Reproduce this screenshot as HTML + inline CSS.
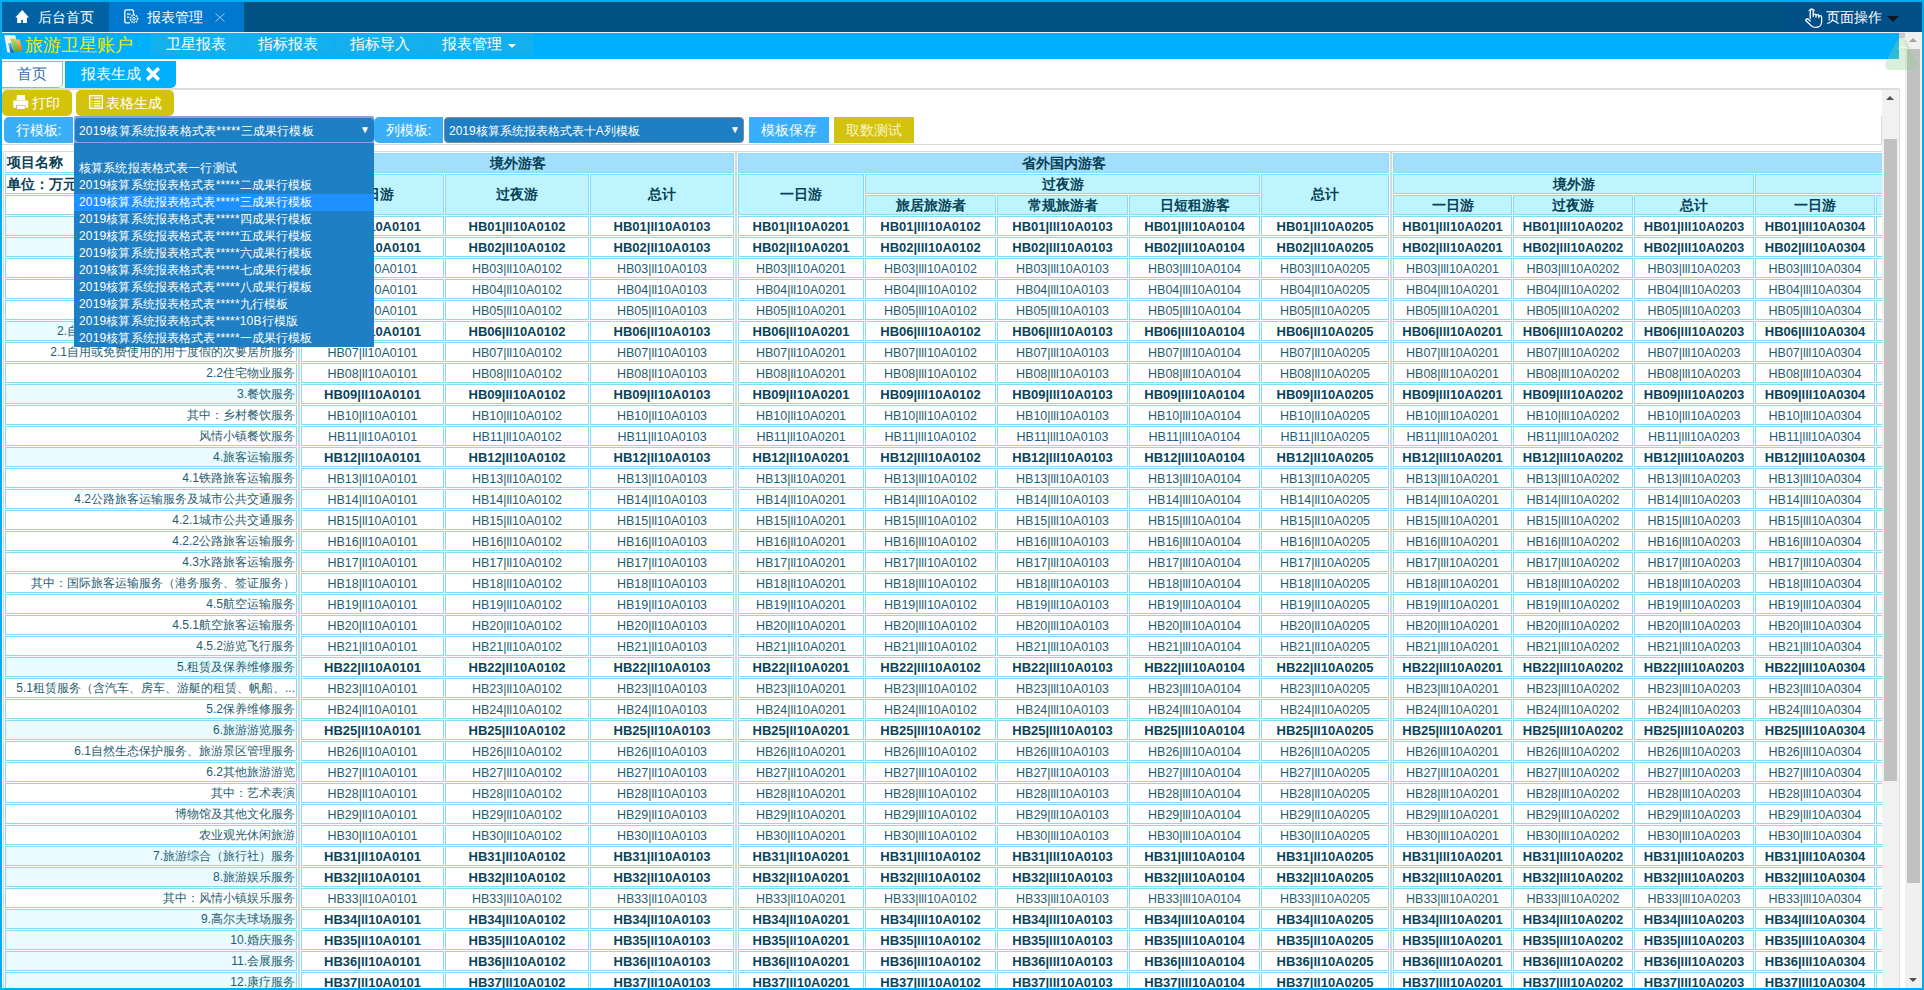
<!DOCTYPE html>
<html><head><meta charset="utf-8"><title>报表生成</title>
<style>
*{box-sizing:border-box;margin:0;padding:0}
html,body{width:1924px;height:990px;overflow:hidden;background:#fff;font-family:"Liberation Sans", sans-serif}
.a{position:absolute}
.t{position:absolute;white-space:nowrap}
svg{display:block}
.navi{position:absolute;top:33px;height:22px;background:#14b0ee}
.c{position:absolute;border:1px solid #80dcf8;font-size:12.5px;line-height:20px;text-align:center;white-space:nowrap;overflow:hidden;color:#1f5d6f;background:#fff}
.dc.b{font-weight:bold;font-size:13px;color:#07455a}
.lc{text-align:right;padding-right:1px;font-size:12px;line-height:18px}
.lc.hl{background:#e9fbff}
.lh{text-align:left;font-weight:bold;font-size:14px;padding-left:1px;color:#0a4257;line-height:17px}
.h1{background:#a2dffc;border-top-color:#92dcfa;font-weight:bold;font-size:14px;color:#0a4257;line-height:18px}
.h2{background:#bdf4fd;font-weight:bold;font-size:14px;color:#0a4257;line-height:18px}
.h2.tall{line-height:39px}
#tclip{position:absolute;left:0;top:0;width:1882px;height:988px;overflow:hidden}
#dd{position:absolute;left:74px;top:143px;width:300px;height:204px;background:#1f7fc4;color:#fff;font-size:12px}
.ddi{height:17px;line-height:17px;padding-left:5px;white-space:nowrap;overflow:hidden;letter-spacing:0.15px}
.ddi.sel{background:#1e90ff}
.btn{position:absolute;height:26px;line-height:26px;color:#fff;white-space:nowrap;text-align:center}
</style></head><body>
<!-- top tab bar -->
<div class="a" style="left:2px;top:2px;width:1920px;height:30px;background:#005282"></div>
<div class="a" style="left:2px;top:2px;width:107px;height:30px;background:#0062a2"></div>
<div class="a" style="left:15px;top:10px"><svg width="14" height="13" viewBox="0 0 14 13"><path d="M7.2 0 L14 7.4 L11.9 7.4 L11.9 13 L7.9 13 L7.9 9.9 L6.2 9.9 L6.2 13 L2.2 13 L2.2 7.4 L0.2 7.4 Z" fill="#fff"/></svg></div>
<div class="t" style="left:38px;top:2px;line-height:30px;font-size:14px;color:#fff">后台首页</div>
<div class="a" style="left:109px;top:2px;width:135px;height:30px;background:#0078cf"></div>
<div class="a" style="left:124px;top:9px"><svg width="15" height="15" viewBox="0 0 15 15"><path d="M9.5 6 V2 a1.2 1.2 0 0 0 -1.2 -1.2 H2 a1.2 1.2 0 0 0 -1.2 1.2 V12.6 a1.2 1.2 0 0 0 1.2 1.2 H6" fill="none" stroke="#fff" stroke-width="1.3"/><path d="M3 5.2h3.5M3 8.2h2" stroke="#fff" stroke-width="1.2"/><circle cx="10" cy="9.8" r="3.6" fill="none" stroke="#fff" stroke-width="1.6" stroke-dasharray="1.4 0.9"/><circle cx="10" cy="9.8" r="1.3" fill="none" stroke="#fff" stroke-width="1"/></svg></div>
<div class="t" style="left:147px;top:2px;line-height:30px;font-size:14px;color:#fff">报表管理</div>
<div class="a" style="left:215px;top:13px"><svg width="10" height="9" viewBox="0 0 10 9"><path d="M0.5 0.5 L9.5 8.5 M9.5 0.5 L0.5 8.5" stroke="#a9c3da" stroke-width="1"/></svg></div>
<div class="a" style="left:1786px;top:2px;width:136px;height:30px;background:#004f87"></div>
<div class="a" style="left:1805px;top:7px"><svg width="18" height="21" viewBox="0 0 18 21"><path d="M5.2 11.5 V3.8 a1.5 1.5 0 0 1 3 0 V9.5 M8.2 8.5 a1.4 1.4 0 0 1 2.8 0 V10 M11 9 a1.4 1.4 0 0 1 2.8 0 V10.5 M13.8 10 a1.4 1.4 0 0 1 2.8 0 V15 c0 3 -2.3 5.3 -5.3 5.3 h-1.5 c-2 0 -3.3 -1 -4.5 -2.5 L1.2 14 a1.3 1.3 0 0 1 2 -1.7 L5.2 14" fill="none" stroke="#fff" stroke-width="1.3" stroke-linecap="round" stroke-linejoin="round"/><path d="M3.6 4.2 a3.2 3.2 0 0 1 6.2 0" fill="none" stroke="#fff" stroke-width="1" opacity="0.8"/></svg></div>
<div class="t" style="left:1826px;top:2px;line-height:30px;font-size:14px;color:#fff">页面操作</div>
<div class="a" style="left:1887px;top:16px;width:0;height:0;border-left:6px solid transparent;border-right:6px solid transparent;border-top:6px solid #0b1628"></div>
<div class="a" style="left:2px;top:32px;width:1920px;height:1px;background:#e6f3fa"></div>
<!-- nav bar -->
<div class="a" style="left:2px;top:33px;width:1897px;height:26px;background:#00b0ff"></div>
<div class="a" style="left:4px;top:35px"><svg width="20" height="20" viewBox="0 0 20 20"><defs><linearGradient id="gb" x1="0" y1="0" x2="0" y2="1"><stop offset="0" stop-color="#5cc8ff"/><stop offset="1" stop-color="#0a4fd0"/></linearGradient><linearGradient id="gg" x1="0" y1="0" x2="0" y2="1"><stop offset="0" stop-color="#b8e070"/><stop offset="1" stop-color="#5ea81a"/></linearGradient><linearGradient id="go" x1="0" y1="0" x2="0" y2="1"><stop offset="0" stop-color="#ffc070"/><stop offset="1" stop-color="#ff6a00"/></linearGradient></defs><path d="M0.2 0.2 L11.2 0.2 L13.8 11 L7 17.4 L3.4 17.4 Z" fill="#f4f4f4"/><path d="M12.1 4.4 L15.8 4.4 L18.6 15.3 L15 15.6 Z" fill="url(#go)"/><path d="M6 3.4 L11.5 3.4 L15 16.6 L10.2 17.2 Z" fill="url(#gg)"/><path d="M4.1 7.9 L7.2 7.9 L9.8 17.6 L6.4 17.6 Z" fill="url(#gb)"/></svg></div>
<div class="t" style="left:25px;top:33px;line-height:24px;font-size:18px;color:#f3e800">旅游卫星账户</div>
<div class="navi" style="left:151px;width:91px"></div>
<div class="navi" style="left:243px;width:91px"></div>
<div class="navi" style="left:335px;width:91px"></div>
<div class="navi" style="left:427px;width:106px"></div>
<div class="t" style="left:166px;top:33px;line-height:22px;font-size:15px;color:#fff">卫星报表</div>
<div class="t" style="left:258px;top:33px;line-height:22px;font-size:15px;color:#fff">指标报表</div>
<div class="t" style="left:350px;top:33px;line-height:22px;font-size:15px;color:#fff">指标导入</div>
<div class="t" style="left:442px;top:33px;line-height:22px;font-size:15px;color:#fff">报表管理</div>
<div class="a" style="left:508px;top:44px;width:0;height:0;border-left:4px solid transparent;border-right:4px solid transparent;border-top:4px solid #fff"></div>
<!-- outer scrollbar -->
<div class="a" style="left:1899px;top:33px;width:6px;height:955px;background:#fff"></div>
<div class="a" style="left:1899px;top:33px;width:6px;height:5px;background:#c8c8c8"></div>
<div class="a" style="left:1905px;top:33px;width:17px;height:955px;background:#f0f0f0"></div>
<div class="a" style="left:1909px;top:38px;width:0;height:0;border-left:4.5px solid transparent;border-right:4.5px solid transparent;border-bottom:4.5px solid #a3a3a3"></div>
<div class="a" style="left:1907px;top:49px;width:13px;height:834px;background:#c1c1c1"></div>
<div class="a" style="left:1909px;top:978px;width:0;height:0;border-left:4.5px solid transparent;border-right:4.5px solid transparent;border-top:4.5px solid #505050"></div>
<!-- sub tabs -->
<div class="a" style="left:2px;top:61px;width:61px;height:27px;border:1px solid #72d0a0;border-left:0;border-radius:0 0 5px 0;background:#fff"></div>
<div class="t" style="left:17px;top:61px;line-height:26px;font-size:15px;color:#3a6db0">首页</div>
<div class="a" style="left:65px;top:61px;width:111px;height:27px;background:#00b0fa;border-radius:0 0 5px 0"></div>
<div class="t" style="left:81px;top:61px;line-height:26px;font-size:15px;color:#fff">报表生成</div>
<div class="a" style="left:146px;top:67px"><svg width="14" height="14" viewBox="0 0 14 14"><path d="M1.2 1.2 L12.8 12.8 M12.8 1.2 L1.2 12.8" stroke="#fff" stroke-width="3.6" stroke-linecap="butt"/></svg></div>
<div class="a" style="left:2px;top:88px;width:1897px;height:2px;background:#dcdcdc"></div>
<div class="a" style="left:1899px;top:89px;width:1px;height:899px;background:#dcdcdc"></div>
<!-- buttons -->
<div class="a" style="left:2px;top:90px;width:70px;height:26px;background:#d4c30c;border-radius:5px"></div>
<div class="a" style="left:13px;top:95px"><svg width="16" height="14" viewBox="0 0 16 14"><path d="M4 0 H11.8 L12.3 5.2 H3.5 Z" fill="#fff"/><path d="M0.3 5.5 H15.2 V12.7 H12.6 V10.2 H2.9 V12.7 H0.3 Z" fill="#fff"/><rect x="4" y="10.9" width="7.8" height="3.1" fill="#fff"/></svg></div>
<div class="t" style="left:32px;top:90px;line-height:26px;font-size:14px;color:#fff">打印</div>
<div class="a" style="left:76px;top:90px;width:98px;height:26px;background:#d4c30c;border-radius:5px"></div>
<div class="a" style="left:89px;top:95px"><svg width="14" height="14" viewBox="0 0 14 14"><rect x="0.7" y="0.7" width="12.6" height="12.6" fill="none" stroke="#fff" stroke-width="1.4"/><path d="M2.6 3.2h1M5 3.2h6.4M2.6 6.3h1M5 6.3h6.4M2.6 8.6h1M5 8.6h6.4M2.6 10.8h1M5 10.8h6.4" stroke="#fff" stroke-width="1.3"/></svg></div>
<div class="t" style="left:106px;top:90px;line-height:26px;font-size:14px;color:#fff">表格生成</div>
<!-- select row -->
<div class="a" style="left:2px;top:144px;width:1880px;height:1px;background:#d8d8d8"></div>
<div class="a" style="left:1881px;top:116px;width:1px;height:29px;background:#d8d8d8"></div>
<div class="btn" style="left:4px;top:117px;width:69px;background:#3aaff7;border-radius:5px 0 0 5px;font-size:14px">行模板:</div>
<div class="a" style="left:74px;top:116px;width:300px;height:28px;background:#8a9fe6;border-radius:2px"></div><div class="a" style="left:75px;top:118px;width:299px;height:24px;background:#1f7fc4;border-radius:4px"></div>
<div class="t" style="left:79px;top:118px;width:278px;overflow:hidden;line-height:26px;font-size:12px;letter-spacing:0.2px;color:#fff">2019核算系统报表格式表*****三成果行模板</div>
<div class="t" style="left:360px;top:117px;line-height:26px;font-size:10px;color:#fff">▼</div>
<div class="btn" style="left:374px;top:117px;width:69px;background:#3aaff7;border-radius:5px 0 0 5px;font-size:14px">列模板:</div>
<div class="a" style="left:444px;top:117px;width:300px;height:26px;background:#1f7fc4;border:1px solid #8a8a8a;border-radius:4px"></div>
<div class="t" style="left:449px;top:118px;width:278px;overflow:hidden;line-height:26px;font-size:12px;color:#fff">2019核算系统报表格式表十A列模板</div>
<div class="t" style="left:730px;top:117px;line-height:26px;font-size:10px;color:#fff">▼</div>
<div class="btn" style="left:749px;top:117px;width:80px;background:#38aefc;font-size:14px">模板保存</div>
<div class="btn" style="left:834px;top:117px;width:80px;background:#d4c30c;font-size:14px;color:#f8f4d0">取数测试</div>
<!-- table container -->
<div class="a" style="left:3px;top:151px;width:1879px;height:1px;background:#dadada"></div>
<div class="a" style="left:3px;top:151px;width:1px;height:837px;background:#dadada"></div>
<div id="tclip">
<div class="c lc hl" style="left:5px;top:216px;width:292px;height:20px;">旅游特征产品合计</div>
<div class="c dc b" style="left:301px;top:216px;width:143px;height:20px;">HB01|ll10A0101</div>
<div class="c dc b" style="left:445px;top:216px;width:144px;height:20px;">HB01|ll10A0102</div>
<div class="c dc b" style="left:590px;top:216px;width:144px;height:20px;">HB01|ll10A0103</div>
<div class="c dc b" style="left:738px;top:216px;width:126px;height:20px;">HB01|ll10A0201</div>
<div class="c dc b" style="left:865px;top:216px;width:131px;height:20px;">HB01|lll10A0102</div>
<div class="c dc b" style="left:997px;top:216px;width:131px;height:20px;">HB01|lll10A0103</div>
<div class="c dc b" style="left:1129px;top:216px;width:131px;height:20px;">HB01|lll10A0104</div>
<div class="c dc b" style="left:1261px;top:216px;width:128px;height:20px;">HB01|ll10A0205</div>
<div class="c dc b" style="left:1393px;top:216px;width:119px;height:20px;">HB01|lll10A0201</div>
<div class="c dc b" style="left:1513px;top:216px;width:120px;height:20px;">HB01|lll10A0202</div>
<div class="c dc b" style="left:1634px;top:216px;width:120px;height:20px;">HB01|lll10A0203</div>
<div class="c dc b" style="left:1755px;top:216px;width:120px;height:20px;">HB01|lll10A0304</div>
<div class="c dc b" style="left:1876px;top:216px;width:121px;height:20px;">HB01|lll10A0305</div>
<div class="c lc hl" style="left:5px;top:237px;width:292px;height:20px;">1.住宿服务</div>
<div class="c dc b" style="left:301px;top:237px;width:143px;height:20px;">HB02|ll10A0101</div>
<div class="c dc b" style="left:445px;top:237px;width:144px;height:20px;">HB02|ll10A0102</div>
<div class="c dc b" style="left:590px;top:237px;width:144px;height:20px;">HB02|ll10A0103</div>
<div class="c dc b" style="left:738px;top:237px;width:126px;height:20px;">HB02|ll10A0201</div>
<div class="c dc b" style="left:865px;top:237px;width:131px;height:20px;">HB02|lll10A0102</div>
<div class="c dc b" style="left:997px;top:237px;width:131px;height:20px;">HB02|lll10A0103</div>
<div class="c dc b" style="left:1129px;top:237px;width:131px;height:20px;">HB02|lll10A0104</div>
<div class="c dc b" style="left:1261px;top:237px;width:128px;height:20px;">HB02|ll10A0205</div>
<div class="c dc b" style="left:1393px;top:237px;width:119px;height:20px;">HB02|lll10A0201</div>
<div class="c dc b" style="left:1513px;top:237px;width:120px;height:20px;">HB02|lll10A0202</div>
<div class="c dc b" style="left:1634px;top:237px;width:120px;height:20px;">HB02|lll10A0203</div>
<div class="c dc b" style="left:1755px;top:237px;width:120px;height:20px;">HB02|lll10A0304</div>
<div class="c dc b" style="left:1876px;top:237px;width:121px;height:20px;">HB02|lll10A0305</div>
<div class="c lc" style="left:5px;top:258px;width:292px;height:20px;">1.1酒店住宿服务</div>
<div class="c dc" style="left:301px;top:258px;width:143px;height:20px;">HB03|ll10A0101</div>
<div class="c dc" style="left:445px;top:258px;width:144px;height:20px;">HB03|ll10A0102</div>
<div class="c dc" style="left:590px;top:258px;width:144px;height:20px;">HB03|ll10A0103</div>
<div class="c dc" style="left:738px;top:258px;width:126px;height:20px;">HB03|ll10A0201</div>
<div class="c dc" style="left:865px;top:258px;width:131px;height:20px;">HB03|lll10A0102</div>
<div class="c dc" style="left:997px;top:258px;width:131px;height:20px;">HB03|lll10A0103</div>
<div class="c dc" style="left:1129px;top:258px;width:131px;height:20px;">HB03|lll10A0104</div>
<div class="c dc" style="left:1261px;top:258px;width:128px;height:20px;">HB03|ll10A0205</div>
<div class="c dc" style="left:1393px;top:258px;width:119px;height:20px;">HB03|lll10A0201</div>
<div class="c dc" style="left:1513px;top:258px;width:120px;height:20px;">HB03|lll10A0202</div>
<div class="c dc" style="left:1634px;top:258px;width:120px;height:20px;">HB03|lll10A0203</div>
<div class="c dc" style="left:1755px;top:258px;width:120px;height:20px;">HB03|lll10A0304</div>
<div class="c dc" style="left:1876px;top:258px;width:121px;height:20px;">HB03|lll10A0305</div>
<div class="c lc" style="left:5px;top:279px;width:292px;height:20px;">1.2民宿服务</div>
<div class="c dc" style="left:301px;top:279px;width:143px;height:20px;">HB04|ll10A0101</div>
<div class="c dc" style="left:445px;top:279px;width:144px;height:20px;">HB04|ll10A0102</div>
<div class="c dc" style="left:590px;top:279px;width:144px;height:20px;">HB04|ll10A0103</div>
<div class="c dc" style="left:738px;top:279px;width:126px;height:20px;">HB04|ll10A0201</div>
<div class="c dc" style="left:865px;top:279px;width:131px;height:20px;">HB04|lll10A0102</div>
<div class="c dc" style="left:997px;top:279px;width:131px;height:20px;">HB04|lll10A0103</div>
<div class="c dc" style="left:1129px;top:279px;width:131px;height:20px;">HB04|lll10A0104</div>
<div class="c dc" style="left:1261px;top:279px;width:128px;height:20px;">HB04|ll10A0205</div>
<div class="c dc" style="left:1393px;top:279px;width:119px;height:20px;">HB04|lll10A0201</div>
<div class="c dc" style="left:1513px;top:279px;width:120px;height:20px;">HB04|lll10A0202</div>
<div class="c dc" style="left:1634px;top:279px;width:120px;height:20px;">HB04|lll10A0203</div>
<div class="c dc" style="left:1755px;top:279px;width:120px;height:20px;">HB04|lll10A0304</div>
<div class="c dc" style="left:1876px;top:279px;width:121px;height:20px;">HB04|lll10A0305</div>
<div class="c lc" style="left:5px;top:300px;width:292px;height:20px;">1.3露营地服务</div>
<div class="c dc" style="left:301px;top:300px;width:143px;height:20px;">HB05|ll10A0101</div>
<div class="c dc" style="left:445px;top:300px;width:144px;height:20px;">HB05|ll10A0102</div>
<div class="c dc" style="left:590px;top:300px;width:144px;height:20px;">HB05|ll10A0103</div>
<div class="c dc" style="left:738px;top:300px;width:126px;height:20px;">HB05|ll10A0201</div>
<div class="c dc" style="left:865px;top:300px;width:131px;height:20px;">HB05|lll10A0102</div>
<div class="c dc" style="left:997px;top:300px;width:131px;height:20px;">HB05|lll10A0103</div>
<div class="c dc" style="left:1129px;top:300px;width:131px;height:20px;">HB05|lll10A0104</div>
<div class="c dc" style="left:1261px;top:300px;width:128px;height:20px;">HB05|ll10A0205</div>
<div class="c dc" style="left:1393px;top:300px;width:119px;height:20px;">HB05|lll10A0201</div>
<div class="c dc" style="left:1513px;top:300px;width:120px;height:20px;">HB05|lll10A0202</div>
<div class="c dc" style="left:1634px;top:300px;width:120px;height:20px;">HB05|lll10A0203</div>
<div class="c dc" style="left:1755px;top:300px;width:120px;height:20px;">HB05|lll10A0304</div>
<div class="c dc" style="left:1876px;top:300px;width:121px;height:20px;">HB05|lll10A0305</div>
<div class="c lc hl" style="left:5px;top:321px;width:292px;height:20px;">2.自有住房或免费使用的用于度假的居所服务</div>
<div class="c dc b" style="left:301px;top:321px;width:143px;height:20px;">HB06|ll10A0101</div>
<div class="c dc b" style="left:445px;top:321px;width:144px;height:20px;">HB06|ll10A0102</div>
<div class="c dc b" style="left:590px;top:321px;width:144px;height:20px;">HB06|ll10A0103</div>
<div class="c dc b" style="left:738px;top:321px;width:126px;height:20px;">HB06|ll10A0201</div>
<div class="c dc b" style="left:865px;top:321px;width:131px;height:20px;">HB06|lll10A0102</div>
<div class="c dc b" style="left:997px;top:321px;width:131px;height:20px;">HB06|lll10A0103</div>
<div class="c dc b" style="left:1129px;top:321px;width:131px;height:20px;">HB06|lll10A0104</div>
<div class="c dc b" style="left:1261px;top:321px;width:128px;height:20px;">HB06|ll10A0205</div>
<div class="c dc b" style="left:1393px;top:321px;width:119px;height:20px;">HB06|lll10A0201</div>
<div class="c dc b" style="left:1513px;top:321px;width:120px;height:20px;">HB06|lll10A0202</div>
<div class="c dc b" style="left:1634px;top:321px;width:120px;height:20px;">HB06|lll10A0203</div>
<div class="c dc b" style="left:1755px;top:321px;width:120px;height:20px;">HB06|lll10A0304</div>
<div class="c dc b" style="left:1876px;top:321px;width:121px;height:20px;">HB06|lll10A0305</div>
<div class="c lc" style="left:5px;top:342px;width:292px;height:20px;">2.1自用或免费使用的用于度假的次要居所服务</div>
<div class="c dc" style="left:301px;top:342px;width:143px;height:20px;">HB07|ll10A0101</div>
<div class="c dc" style="left:445px;top:342px;width:144px;height:20px;">HB07|ll10A0102</div>
<div class="c dc" style="left:590px;top:342px;width:144px;height:20px;">HB07|ll10A0103</div>
<div class="c dc" style="left:738px;top:342px;width:126px;height:20px;">HB07|ll10A0201</div>
<div class="c dc" style="left:865px;top:342px;width:131px;height:20px;">HB07|lll10A0102</div>
<div class="c dc" style="left:997px;top:342px;width:131px;height:20px;">HB07|lll10A0103</div>
<div class="c dc" style="left:1129px;top:342px;width:131px;height:20px;">HB07|lll10A0104</div>
<div class="c dc" style="left:1261px;top:342px;width:128px;height:20px;">HB07|ll10A0205</div>
<div class="c dc" style="left:1393px;top:342px;width:119px;height:20px;">HB07|lll10A0201</div>
<div class="c dc" style="left:1513px;top:342px;width:120px;height:20px;">HB07|lll10A0202</div>
<div class="c dc" style="left:1634px;top:342px;width:120px;height:20px;">HB07|lll10A0203</div>
<div class="c dc" style="left:1755px;top:342px;width:120px;height:20px;">HB07|lll10A0304</div>
<div class="c dc" style="left:1876px;top:342px;width:121px;height:20px;">HB07|lll10A0305</div>
<div class="c lc" style="left:5px;top:363px;width:292px;height:20px;">2.2住宅物业服务</div>
<div class="c dc" style="left:301px;top:363px;width:143px;height:20px;">HB08|ll10A0101</div>
<div class="c dc" style="left:445px;top:363px;width:144px;height:20px;">HB08|ll10A0102</div>
<div class="c dc" style="left:590px;top:363px;width:144px;height:20px;">HB08|ll10A0103</div>
<div class="c dc" style="left:738px;top:363px;width:126px;height:20px;">HB08|ll10A0201</div>
<div class="c dc" style="left:865px;top:363px;width:131px;height:20px;">HB08|lll10A0102</div>
<div class="c dc" style="left:997px;top:363px;width:131px;height:20px;">HB08|lll10A0103</div>
<div class="c dc" style="left:1129px;top:363px;width:131px;height:20px;">HB08|lll10A0104</div>
<div class="c dc" style="left:1261px;top:363px;width:128px;height:20px;">HB08|ll10A0205</div>
<div class="c dc" style="left:1393px;top:363px;width:119px;height:20px;">HB08|lll10A0201</div>
<div class="c dc" style="left:1513px;top:363px;width:120px;height:20px;">HB08|lll10A0202</div>
<div class="c dc" style="left:1634px;top:363px;width:120px;height:20px;">HB08|lll10A0203</div>
<div class="c dc" style="left:1755px;top:363px;width:120px;height:20px;">HB08|lll10A0304</div>
<div class="c dc" style="left:1876px;top:363px;width:121px;height:20px;">HB08|lll10A0305</div>
<div class="c lc hl" style="left:5px;top:384px;width:292px;height:20px;">3.餐饮服务</div>
<div class="c dc b" style="left:301px;top:384px;width:143px;height:20px;">HB09|ll10A0101</div>
<div class="c dc b" style="left:445px;top:384px;width:144px;height:20px;">HB09|ll10A0102</div>
<div class="c dc b" style="left:590px;top:384px;width:144px;height:20px;">HB09|ll10A0103</div>
<div class="c dc b" style="left:738px;top:384px;width:126px;height:20px;">HB09|ll10A0201</div>
<div class="c dc b" style="left:865px;top:384px;width:131px;height:20px;">HB09|lll10A0102</div>
<div class="c dc b" style="left:997px;top:384px;width:131px;height:20px;">HB09|lll10A0103</div>
<div class="c dc b" style="left:1129px;top:384px;width:131px;height:20px;">HB09|lll10A0104</div>
<div class="c dc b" style="left:1261px;top:384px;width:128px;height:20px;">HB09|ll10A0205</div>
<div class="c dc b" style="left:1393px;top:384px;width:119px;height:20px;">HB09|lll10A0201</div>
<div class="c dc b" style="left:1513px;top:384px;width:120px;height:20px;">HB09|lll10A0202</div>
<div class="c dc b" style="left:1634px;top:384px;width:120px;height:20px;">HB09|lll10A0203</div>
<div class="c dc b" style="left:1755px;top:384px;width:120px;height:20px;">HB09|lll10A0304</div>
<div class="c dc b" style="left:1876px;top:384px;width:121px;height:20px;">HB09|lll10A0305</div>
<div class="c lc" style="left:5px;top:405px;width:292px;height:20px;">其中：乡村餐饮服务</div>
<div class="c dc" style="left:301px;top:405px;width:143px;height:20px;">HB10|ll10A0101</div>
<div class="c dc" style="left:445px;top:405px;width:144px;height:20px;">HB10|ll10A0102</div>
<div class="c dc" style="left:590px;top:405px;width:144px;height:20px;">HB10|ll10A0103</div>
<div class="c dc" style="left:738px;top:405px;width:126px;height:20px;">HB10|ll10A0201</div>
<div class="c dc" style="left:865px;top:405px;width:131px;height:20px;">HB10|lll10A0102</div>
<div class="c dc" style="left:997px;top:405px;width:131px;height:20px;">HB10|lll10A0103</div>
<div class="c dc" style="left:1129px;top:405px;width:131px;height:20px;">HB10|lll10A0104</div>
<div class="c dc" style="left:1261px;top:405px;width:128px;height:20px;">HB10|ll10A0205</div>
<div class="c dc" style="left:1393px;top:405px;width:119px;height:20px;">HB10|lll10A0201</div>
<div class="c dc" style="left:1513px;top:405px;width:120px;height:20px;">HB10|lll10A0202</div>
<div class="c dc" style="left:1634px;top:405px;width:120px;height:20px;">HB10|lll10A0203</div>
<div class="c dc" style="left:1755px;top:405px;width:120px;height:20px;">HB10|lll10A0304</div>
<div class="c dc" style="left:1876px;top:405px;width:121px;height:20px;">HB10|lll10A0305</div>
<div class="c lc" style="left:5px;top:426px;width:292px;height:20px;">风情小镇餐饮服务</div>
<div class="c dc" style="left:301px;top:426px;width:143px;height:20px;">HB11|ll10A0101</div>
<div class="c dc" style="left:445px;top:426px;width:144px;height:20px;">HB11|ll10A0102</div>
<div class="c dc" style="left:590px;top:426px;width:144px;height:20px;">HB11|ll10A0103</div>
<div class="c dc" style="left:738px;top:426px;width:126px;height:20px;">HB11|ll10A0201</div>
<div class="c dc" style="left:865px;top:426px;width:131px;height:20px;">HB11|lll10A0102</div>
<div class="c dc" style="left:997px;top:426px;width:131px;height:20px;">HB11|lll10A0103</div>
<div class="c dc" style="left:1129px;top:426px;width:131px;height:20px;">HB11|lll10A0104</div>
<div class="c dc" style="left:1261px;top:426px;width:128px;height:20px;">HB11|ll10A0205</div>
<div class="c dc" style="left:1393px;top:426px;width:119px;height:20px;">HB11|lll10A0201</div>
<div class="c dc" style="left:1513px;top:426px;width:120px;height:20px;">HB11|lll10A0202</div>
<div class="c dc" style="left:1634px;top:426px;width:120px;height:20px;">HB11|lll10A0203</div>
<div class="c dc" style="left:1755px;top:426px;width:120px;height:20px;">HB11|lll10A0304</div>
<div class="c dc" style="left:1876px;top:426px;width:121px;height:20px;">HB11|lll10A0305</div>
<div class="c lc hl" style="left:5px;top:447px;width:292px;height:20px;">4.旅客运输服务</div>
<div class="c dc b" style="left:301px;top:447px;width:143px;height:20px;">HB12|ll10A0101</div>
<div class="c dc b" style="left:445px;top:447px;width:144px;height:20px;">HB12|ll10A0102</div>
<div class="c dc b" style="left:590px;top:447px;width:144px;height:20px;">HB12|ll10A0103</div>
<div class="c dc b" style="left:738px;top:447px;width:126px;height:20px;">HB12|ll10A0201</div>
<div class="c dc b" style="left:865px;top:447px;width:131px;height:20px;">HB12|lll10A0102</div>
<div class="c dc b" style="left:997px;top:447px;width:131px;height:20px;">HB12|lll10A0103</div>
<div class="c dc b" style="left:1129px;top:447px;width:131px;height:20px;">HB12|lll10A0104</div>
<div class="c dc b" style="left:1261px;top:447px;width:128px;height:20px;">HB12|ll10A0205</div>
<div class="c dc b" style="left:1393px;top:447px;width:119px;height:20px;">HB12|lll10A0201</div>
<div class="c dc b" style="left:1513px;top:447px;width:120px;height:20px;">HB12|lll10A0202</div>
<div class="c dc b" style="left:1634px;top:447px;width:120px;height:20px;">HB12|lll10A0203</div>
<div class="c dc b" style="left:1755px;top:447px;width:120px;height:20px;">HB12|lll10A0304</div>
<div class="c dc b" style="left:1876px;top:447px;width:121px;height:20px;">HB12|lll10A0305</div>
<div class="c lc" style="left:5px;top:468px;width:292px;height:20px;">4.1铁路旅客运输服务</div>
<div class="c dc" style="left:301px;top:468px;width:143px;height:20px;">HB13|ll10A0101</div>
<div class="c dc" style="left:445px;top:468px;width:144px;height:20px;">HB13|ll10A0102</div>
<div class="c dc" style="left:590px;top:468px;width:144px;height:20px;">HB13|ll10A0103</div>
<div class="c dc" style="left:738px;top:468px;width:126px;height:20px;">HB13|ll10A0201</div>
<div class="c dc" style="left:865px;top:468px;width:131px;height:20px;">HB13|lll10A0102</div>
<div class="c dc" style="left:997px;top:468px;width:131px;height:20px;">HB13|lll10A0103</div>
<div class="c dc" style="left:1129px;top:468px;width:131px;height:20px;">HB13|lll10A0104</div>
<div class="c dc" style="left:1261px;top:468px;width:128px;height:20px;">HB13|ll10A0205</div>
<div class="c dc" style="left:1393px;top:468px;width:119px;height:20px;">HB13|lll10A0201</div>
<div class="c dc" style="left:1513px;top:468px;width:120px;height:20px;">HB13|lll10A0202</div>
<div class="c dc" style="left:1634px;top:468px;width:120px;height:20px;">HB13|lll10A0203</div>
<div class="c dc" style="left:1755px;top:468px;width:120px;height:20px;">HB13|lll10A0304</div>
<div class="c dc" style="left:1876px;top:468px;width:121px;height:20px;">HB13|lll10A0305</div>
<div class="c lc" style="left:5px;top:489px;width:292px;height:20px;">4.2公路旅客运输服务及城市公共交通服务</div>
<div class="c dc" style="left:301px;top:489px;width:143px;height:20px;">HB14|ll10A0101</div>
<div class="c dc" style="left:445px;top:489px;width:144px;height:20px;">HB14|ll10A0102</div>
<div class="c dc" style="left:590px;top:489px;width:144px;height:20px;">HB14|ll10A0103</div>
<div class="c dc" style="left:738px;top:489px;width:126px;height:20px;">HB14|ll10A0201</div>
<div class="c dc" style="left:865px;top:489px;width:131px;height:20px;">HB14|lll10A0102</div>
<div class="c dc" style="left:997px;top:489px;width:131px;height:20px;">HB14|lll10A0103</div>
<div class="c dc" style="left:1129px;top:489px;width:131px;height:20px;">HB14|lll10A0104</div>
<div class="c dc" style="left:1261px;top:489px;width:128px;height:20px;">HB14|ll10A0205</div>
<div class="c dc" style="left:1393px;top:489px;width:119px;height:20px;">HB14|lll10A0201</div>
<div class="c dc" style="left:1513px;top:489px;width:120px;height:20px;">HB14|lll10A0202</div>
<div class="c dc" style="left:1634px;top:489px;width:120px;height:20px;">HB14|lll10A0203</div>
<div class="c dc" style="left:1755px;top:489px;width:120px;height:20px;">HB14|lll10A0304</div>
<div class="c dc" style="left:1876px;top:489px;width:121px;height:20px;">HB14|lll10A0305</div>
<div class="c lc" style="left:5px;top:510px;width:292px;height:20px;">4.2.1城市公共交通服务</div>
<div class="c dc" style="left:301px;top:510px;width:143px;height:20px;">HB15|ll10A0101</div>
<div class="c dc" style="left:445px;top:510px;width:144px;height:20px;">HB15|ll10A0102</div>
<div class="c dc" style="left:590px;top:510px;width:144px;height:20px;">HB15|ll10A0103</div>
<div class="c dc" style="left:738px;top:510px;width:126px;height:20px;">HB15|ll10A0201</div>
<div class="c dc" style="left:865px;top:510px;width:131px;height:20px;">HB15|lll10A0102</div>
<div class="c dc" style="left:997px;top:510px;width:131px;height:20px;">HB15|lll10A0103</div>
<div class="c dc" style="left:1129px;top:510px;width:131px;height:20px;">HB15|lll10A0104</div>
<div class="c dc" style="left:1261px;top:510px;width:128px;height:20px;">HB15|ll10A0205</div>
<div class="c dc" style="left:1393px;top:510px;width:119px;height:20px;">HB15|lll10A0201</div>
<div class="c dc" style="left:1513px;top:510px;width:120px;height:20px;">HB15|lll10A0202</div>
<div class="c dc" style="left:1634px;top:510px;width:120px;height:20px;">HB15|lll10A0203</div>
<div class="c dc" style="left:1755px;top:510px;width:120px;height:20px;">HB15|lll10A0304</div>
<div class="c dc" style="left:1876px;top:510px;width:121px;height:20px;">HB15|lll10A0305</div>
<div class="c lc" style="left:5px;top:531px;width:292px;height:20px;">4.2.2公路旅客运输服务</div>
<div class="c dc" style="left:301px;top:531px;width:143px;height:20px;">HB16|ll10A0101</div>
<div class="c dc" style="left:445px;top:531px;width:144px;height:20px;">HB16|ll10A0102</div>
<div class="c dc" style="left:590px;top:531px;width:144px;height:20px;">HB16|ll10A0103</div>
<div class="c dc" style="left:738px;top:531px;width:126px;height:20px;">HB16|ll10A0201</div>
<div class="c dc" style="left:865px;top:531px;width:131px;height:20px;">HB16|lll10A0102</div>
<div class="c dc" style="left:997px;top:531px;width:131px;height:20px;">HB16|lll10A0103</div>
<div class="c dc" style="left:1129px;top:531px;width:131px;height:20px;">HB16|lll10A0104</div>
<div class="c dc" style="left:1261px;top:531px;width:128px;height:20px;">HB16|ll10A0205</div>
<div class="c dc" style="left:1393px;top:531px;width:119px;height:20px;">HB16|lll10A0201</div>
<div class="c dc" style="left:1513px;top:531px;width:120px;height:20px;">HB16|lll10A0202</div>
<div class="c dc" style="left:1634px;top:531px;width:120px;height:20px;">HB16|lll10A0203</div>
<div class="c dc" style="left:1755px;top:531px;width:120px;height:20px;">HB16|lll10A0304</div>
<div class="c dc" style="left:1876px;top:531px;width:121px;height:20px;">HB16|lll10A0305</div>
<div class="c lc" style="left:5px;top:552px;width:292px;height:20px;">4.3水路旅客运输服务</div>
<div class="c dc" style="left:301px;top:552px;width:143px;height:20px;">HB17|ll10A0101</div>
<div class="c dc" style="left:445px;top:552px;width:144px;height:20px;">HB17|ll10A0102</div>
<div class="c dc" style="left:590px;top:552px;width:144px;height:20px;">HB17|ll10A0103</div>
<div class="c dc" style="left:738px;top:552px;width:126px;height:20px;">HB17|ll10A0201</div>
<div class="c dc" style="left:865px;top:552px;width:131px;height:20px;">HB17|lll10A0102</div>
<div class="c dc" style="left:997px;top:552px;width:131px;height:20px;">HB17|lll10A0103</div>
<div class="c dc" style="left:1129px;top:552px;width:131px;height:20px;">HB17|lll10A0104</div>
<div class="c dc" style="left:1261px;top:552px;width:128px;height:20px;">HB17|ll10A0205</div>
<div class="c dc" style="left:1393px;top:552px;width:119px;height:20px;">HB17|lll10A0201</div>
<div class="c dc" style="left:1513px;top:552px;width:120px;height:20px;">HB17|lll10A0202</div>
<div class="c dc" style="left:1634px;top:552px;width:120px;height:20px;">HB17|lll10A0203</div>
<div class="c dc" style="left:1755px;top:552px;width:120px;height:20px;">HB17|lll10A0304</div>
<div class="c dc" style="left:1876px;top:552px;width:121px;height:20px;">HB17|lll10A0305</div>
<div class="c lc" style="left:5px;top:573px;width:292px;height:20px;">其中：国际旅客运输服务（港务服务、签证服务）</div>
<div class="c dc" style="left:301px;top:573px;width:143px;height:20px;">HB18|ll10A0101</div>
<div class="c dc" style="left:445px;top:573px;width:144px;height:20px;">HB18|ll10A0102</div>
<div class="c dc" style="left:590px;top:573px;width:144px;height:20px;">HB18|ll10A0103</div>
<div class="c dc" style="left:738px;top:573px;width:126px;height:20px;">HB18|ll10A0201</div>
<div class="c dc" style="left:865px;top:573px;width:131px;height:20px;">HB18|lll10A0102</div>
<div class="c dc" style="left:997px;top:573px;width:131px;height:20px;">HB18|lll10A0103</div>
<div class="c dc" style="left:1129px;top:573px;width:131px;height:20px;">HB18|lll10A0104</div>
<div class="c dc" style="left:1261px;top:573px;width:128px;height:20px;">HB18|ll10A0205</div>
<div class="c dc" style="left:1393px;top:573px;width:119px;height:20px;">HB18|lll10A0201</div>
<div class="c dc" style="left:1513px;top:573px;width:120px;height:20px;">HB18|lll10A0202</div>
<div class="c dc" style="left:1634px;top:573px;width:120px;height:20px;">HB18|lll10A0203</div>
<div class="c dc" style="left:1755px;top:573px;width:120px;height:20px;">HB18|lll10A0304</div>
<div class="c dc" style="left:1876px;top:573px;width:121px;height:20px;">HB18|lll10A0305</div>
<div class="c lc" style="left:5px;top:594px;width:292px;height:20px;">4.5航空运输服务</div>
<div class="c dc" style="left:301px;top:594px;width:143px;height:20px;">HB19|ll10A0101</div>
<div class="c dc" style="left:445px;top:594px;width:144px;height:20px;">HB19|ll10A0102</div>
<div class="c dc" style="left:590px;top:594px;width:144px;height:20px;">HB19|ll10A0103</div>
<div class="c dc" style="left:738px;top:594px;width:126px;height:20px;">HB19|ll10A0201</div>
<div class="c dc" style="left:865px;top:594px;width:131px;height:20px;">HB19|lll10A0102</div>
<div class="c dc" style="left:997px;top:594px;width:131px;height:20px;">HB19|lll10A0103</div>
<div class="c dc" style="left:1129px;top:594px;width:131px;height:20px;">HB19|lll10A0104</div>
<div class="c dc" style="left:1261px;top:594px;width:128px;height:20px;">HB19|ll10A0205</div>
<div class="c dc" style="left:1393px;top:594px;width:119px;height:20px;">HB19|lll10A0201</div>
<div class="c dc" style="left:1513px;top:594px;width:120px;height:20px;">HB19|lll10A0202</div>
<div class="c dc" style="left:1634px;top:594px;width:120px;height:20px;">HB19|lll10A0203</div>
<div class="c dc" style="left:1755px;top:594px;width:120px;height:20px;">HB19|lll10A0304</div>
<div class="c dc" style="left:1876px;top:594px;width:121px;height:20px;">HB19|lll10A0305</div>
<div class="c lc" style="left:5px;top:615px;width:292px;height:20px;">4.5.1航空旅客运输服务</div>
<div class="c dc" style="left:301px;top:615px;width:143px;height:20px;">HB20|ll10A0101</div>
<div class="c dc" style="left:445px;top:615px;width:144px;height:20px;">HB20|ll10A0102</div>
<div class="c dc" style="left:590px;top:615px;width:144px;height:20px;">HB20|ll10A0103</div>
<div class="c dc" style="left:738px;top:615px;width:126px;height:20px;">HB20|ll10A0201</div>
<div class="c dc" style="left:865px;top:615px;width:131px;height:20px;">HB20|lll10A0102</div>
<div class="c dc" style="left:997px;top:615px;width:131px;height:20px;">HB20|lll10A0103</div>
<div class="c dc" style="left:1129px;top:615px;width:131px;height:20px;">HB20|lll10A0104</div>
<div class="c dc" style="left:1261px;top:615px;width:128px;height:20px;">HB20|ll10A0205</div>
<div class="c dc" style="left:1393px;top:615px;width:119px;height:20px;">HB20|lll10A0201</div>
<div class="c dc" style="left:1513px;top:615px;width:120px;height:20px;">HB20|lll10A0202</div>
<div class="c dc" style="left:1634px;top:615px;width:120px;height:20px;">HB20|lll10A0203</div>
<div class="c dc" style="left:1755px;top:615px;width:120px;height:20px;">HB20|lll10A0304</div>
<div class="c dc" style="left:1876px;top:615px;width:121px;height:20px;">HB20|lll10A0305</div>
<div class="c lc" style="left:5px;top:636px;width:292px;height:20px;">4.5.2游览飞行服务</div>
<div class="c dc" style="left:301px;top:636px;width:143px;height:20px;">HB21|ll10A0101</div>
<div class="c dc" style="left:445px;top:636px;width:144px;height:20px;">HB21|ll10A0102</div>
<div class="c dc" style="left:590px;top:636px;width:144px;height:20px;">HB21|ll10A0103</div>
<div class="c dc" style="left:738px;top:636px;width:126px;height:20px;">HB21|ll10A0201</div>
<div class="c dc" style="left:865px;top:636px;width:131px;height:20px;">HB21|lll10A0102</div>
<div class="c dc" style="left:997px;top:636px;width:131px;height:20px;">HB21|lll10A0103</div>
<div class="c dc" style="left:1129px;top:636px;width:131px;height:20px;">HB21|lll10A0104</div>
<div class="c dc" style="left:1261px;top:636px;width:128px;height:20px;">HB21|ll10A0205</div>
<div class="c dc" style="left:1393px;top:636px;width:119px;height:20px;">HB21|lll10A0201</div>
<div class="c dc" style="left:1513px;top:636px;width:120px;height:20px;">HB21|lll10A0202</div>
<div class="c dc" style="left:1634px;top:636px;width:120px;height:20px;">HB21|lll10A0203</div>
<div class="c dc" style="left:1755px;top:636px;width:120px;height:20px;">HB21|lll10A0304</div>
<div class="c dc" style="left:1876px;top:636px;width:121px;height:20px;">HB21|lll10A0305</div>
<div class="c lc hl" style="left:5px;top:657px;width:292px;height:20px;">5.租赁及保养维修服务</div>
<div class="c dc b" style="left:301px;top:657px;width:143px;height:20px;">HB22|ll10A0101</div>
<div class="c dc b" style="left:445px;top:657px;width:144px;height:20px;">HB22|ll10A0102</div>
<div class="c dc b" style="left:590px;top:657px;width:144px;height:20px;">HB22|ll10A0103</div>
<div class="c dc b" style="left:738px;top:657px;width:126px;height:20px;">HB22|ll10A0201</div>
<div class="c dc b" style="left:865px;top:657px;width:131px;height:20px;">HB22|lll10A0102</div>
<div class="c dc b" style="left:997px;top:657px;width:131px;height:20px;">HB22|lll10A0103</div>
<div class="c dc b" style="left:1129px;top:657px;width:131px;height:20px;">HB22|lll10A0104</div>
<div class="c dc b" style="left:1261px;top:657px;width:128px;height:20px;">HB22|ll10A0205</div>
<div class="c dc b" style="left:1393px;top:657px;width:119px;height:20px;">HB22|lll10A0201</div>
<div class="c dc b" style="left:1513px;top:657px;width:120px;height:20px;">HB22|lll10A0202</div>
<div class="c dc b" style="left:1634px;top:657px;width:120px;height:20px;">HB22|lll10A0203</div>
<div class="c dc b" style="left:1755px;top:657px;width:120px;height:20px;">HB22|lll10A0304</div>
<div class="c dc b" style="left:1876px;top:657px;width:121px;height:20px;">HB22|lll10A0305</div>
<div class="c lc" style="left:5px;top:678px;width:292px;height:20px;">5.1租赁服务（含汽车、房车、游艇的租赁、帆船、...</div>
<div class="c dc" style="left:301px;top:678px;width:143px;height:20px;">HB23|ll10A0101</div>
<div class="c dc" style="left:445px;top:678px;width:144px;height:20px;">HB23|ll10A0102</div>
<div class="c dc" style="left:590px;top:678px;width:144px;height:20px;">HB23|ll10A0103</div>
<div class="c dc" style="left:738px;top:678px;width:126px;height:20px;">HB23|ll10A0201</div>
<div class="c dc" style="left:865px;top:678px;width:131px;height:20px;">HB23|lll10A0102</div>
<div class="c dc" style="left:997px;top:678px;width:131px;height:20px;">HB23|lll10A0103</div>
<div class="c dc" style="left:1129px;top:678px;width:131px;height:20px;">HB23|lll10A0104</div>
<div class="c dc" style="left:1261px;top:678px;width:128px;height:20px;">HB23|ll10A0205</div>
<div class="c dc" style="left:1393px;top:678px;width:119px;height:20px;">HB23|lll10A0201</div>
<div class="c dc" style="left:1513px;top:678px;width:120px;height:20px;">HB23|lll10A0202</div>
<div class="c dc" style="left:1634px;top:678px;width:120px;height:20px;">HB23|lll10A0203</div>
<div class="c dc" style="left:1755px;top:678px;width:120px;height:20px;">HB23|lll10A0304</div>
<div class="c dc" style="left:1876px;top:678px;width:121px;height:20px;">HB23|lll10A0305</div>
<div class="c lc" style="left:5px;top:699px;width:292px;height:20px;">5.2保养维修服务</div>
<div class="c dc" style="left:301px;top:699px;width:143px;height:20px;">HB24|ll10A0101</div>
<div class="c dc" style="left:445px;top:699px;width:144px;height:20px;">HB24|ll10A0102</div>
<div class="c dc" style="left:590px;top:699px;width:144px;height:20px;">HB24|ll10A0103</div>
<div class="c dc" style="left:738px;top:699px;width:126px;height:20px;">HB24|ll10A0201</div>
<div class="c dc" style="left:865px;top:699px;width:131px;height:20px;">HB24|lll10A0102</div>
<div class="c dc" style="left:997px;top:699px;width:131px;height:20px;">HB24|lll10A0103</div>
<div class="c dc" style="left:1129px;top:699px;width:131px;height:20px;">HB24|lll10A0104</div>
<div class="c dc" style="left:1261px;top:699px;width:128px;height:20px;">HB24|ll10A0205</div>
<div class="c dc" style="left:1393px;top:699px;width:119px;height:20px;">HB24|lll10A0201</div>
<div class="c dc" style="left:1513px;top:699px;width:120px;height:20px;">HB24|lll10A0202</div>
<div class="c dc" style="left:1634px;top:699px;width:120px;height:20px;">HB24|lll10A0203</div>
<div class="c dc" style="left:1755px;top:699px;width:120px;height:20px;">HB24|lll10A0304</div>
<div class="c dc" style="left:1876px;top:699px;width:121px;height:20px;">HB24|lll10A0305</div>
<div class="c lc hl" style="left:5px;top:720px;width:292px;height:20px;">6.旅游游览服务</div>
<div class="c dc b" style="left:301px;top:720px;width:143px;height:20px;">HB25|ll10A0101</div>
<div class="c dc b" style="left:445px;top:720px;width:144px;height:20px;">HB25|ll10A0102</div>
<div class="c dc b" style="left:590px;top:720px;width:144px;height:20px;">HB25|ll10A0103</div>
<div class="c dc b" style="left:738px;top:720px;width:126px;height:20px;">HB25|ll10A0201</div>
<div class="c dc b" style="left:865px;top:720px;width:131px;height:20px;">HB25|lll10A0102</div>
<div class="c dc b" style="left:997px;top:720px;width:131px;height:20px;">HB25|lll10A0103</div>
<div class="c dc b" style="left:1129px;top:720px;width:131px;height:20px;">HB25|lll10A0104</div>
<div class="c dc b" style="left:1261px;top:720px;width:128px;height:20px;">HB25|ll10A0205</div>
<div class="c dc b" style="left:1393px;top:720px;width:119px;height:20px;">HB25|lll10A0201</div>
<div class="c dc b" style="left:1513px;top:720px;width:120px;height:20px;">HB25|lll10A0202</div>
<div class="c dc b" style="left:1634px;top:720px;width:120px;height:20px;">HB25|lll10A0203</div>
<div class="c dc b" style="left:1755px;top:720px;width:120px;height:20px;">HB25|lll10A0304</div>
<div class="c dc b" style="left:1876px;top:720px;width:121px;height:20px;">HB25|lll10A0305</div>
<div class="c lc" style="left:5px;top:741px;width:292px;height:20px;">6.1自然生态保护服务、旅游景区管理服务</div>
<div class="c dc" style="left:301px;top:741px;width:143px;height:20px;">HB26|ll10A0101</div>
<div class="c dc" style="left:445px;top:741px;width:144px;height:20px;">HB26|ll10A0102</div>
<div class="c dc" style="left:590px;top:741px;width:144px;height:20px;">HB26|ll10A0103</div>
<div class="c dc" style="left:738px;top:741px;width:126px;height:20px;">HB26|ll10A0201</div>
<div class="c dc" style="left:865px;top:741px;width:131px;height:20px;">HB26|lll10A0102</div>
<div class="c dc" style="left:997px;top:741px;width:131px;height:20px;">HB26|lll10A0103</div>
<div class="c dc" style="left:1129px;top:741px;width:131px;height:20px;">HB26|lll10A0104</div>
<div class="c dc" style="left:1261px;top:741px;width:128px;height:20px;">HB26|ll10A0205</div>
<div class="c dc" style="left:1393px;top:741px;width:119px;height:20px;">HB26|lll10A0201</div>
<div class="c dc" style="left:1513px;top:741px;width:120px;height:20px;">HB26|lll10A0202</div>
<div class="c dc" style="left:1634px;top:741px;width:120px;height:20px;">HB26|lll10A0203</div>
<div class="c dc" style="left:1755px;top:741px;width:120px;height:20px;">HB26|lll10A0304</div>
<div class="c dc" style="left:1876px;top:741px;width:121px;height:20px;">HB26|lll10A0305</div>
<div class="c lc" style="left:5px;top:762px;width:292px;height:20px;">6.2其他旅游游览</div>
<div class="c dc" style="left:301px;top:762px;width:143px;height:20px;">HB27|ll10A0101</div>
<div class="c dc" style="left:445px;top:762px;width:144px;height:20px;">HB27|ll10A0102</div>
<div class="c dc" style="left:590px;top:762px;width:144px;height:20px;">HB27|ll10A0103</div>
<div class="c dc" style="left:738px;top:762px;width:126px;height:20px;">HB27|ll10A0201</div>
<div class="c dc" style="left:865px;top:762px;width:131px;height:20px;">HB27|lll10A0102</div>
<div class="c dc" style="left:997px;top:762px;width:131px;height:20px;">HB27|lll10A0103</div>
<div class="c dc" style="left:1129px;top:762px;width:131px;height:20px;">HB27|lll10A0104</div>
<div class="c dc" style="left:1261px;top:762px;width:128px;height:20px;">HB27|ll10A0205</div>
<div class="c dc" style="left:1393px;top:762px;width:119px;height:20px;">HB27|lll10A0201</div>
<div class="c dc" style="left:1513px;top:762px;width:120px;height:20px;">HB27|lll10A0202</div>
<div class="c dc" style="left:1634px;top:762px;width:120px;height:20px;">HB27|lll10A0203</div>
<div class="c dc" style="left:1755px;top:762px;width:120px;height:20px;">HB27|lll10A0304</div>
<div class="c dc" style="left:1876px;top:762px;width:121px;height:20px;">HB27|lll10A0305</div>
<div class="c lc" style="left:5px;top:783px;width:292px;height:20px;">其中：艺术表演</div>
<div class="c dc" style="left:301px;top:783px;width:143px;height:20px;">HB28|ll10A0101</div>
<div class="c dc" style="left:445px;top:783px;width:144px;height:20px;">HB28|ll10A0102</div>
<div class="c dc" style="left:590px;top:783px;width:144px;height:20px;">HB28|ll10A0103</div>
<div class="c dc" style="left:738px;top:783px;width:126px;height:20px;">HB28|ll10A0201</div>
<div class="c dc" style="left:865px;top:783px;width:131px;height:20px;">HB28|lll10A0102</div>
<div class="c dc" style="left:997px;top:783px;width:131px;height:20px;">HB28|lll10A0103</div>
<div class="c dc" style="left:1129px;top:783px;width:131px;height:20px;">HB28|lll10A0104</div>
<div class="c dc" style="left:1261px;top:783px;width:128px;height:20px;">HB28|ll10A0205</div>
<div class="c dc" style="left:1393px;top:783px;width:119px;height:20px;">HB28|lll10A0201</div>
<div class="c dc" style="left:1513px;top:783px;width:120px;height:20px;">HB28|lll10A0202</div>
<div class="c dc" style="left:1634px;top:783px;width:120px;height:20px;">HB28|lll10A0203</div>
<div class="c dc" style="left:1755px;top:783px;width:120px;height:20px;">HB28|lll10A0304</div>
<div class="c dc" style="left:1876px;top:783px;width:121px;height:20px;">HB28|lll10A0305</div>
<div class="c lc" style="left:5px;top:804px;width:292px;height:20px;">博物馆及其他文化服务</div>
<div class="c dc" style="left:301px;top:804px;width:143px;height:20px;">HB29|ll10A0101</div>
<div class="c dc" style="left:445px;top:804px;width:144px;height:20px;">HB29|ll10A0102</div>
<div class="c dc" style="left:590px;top:804px;width:144px;height:20px;">HB29|ll10A0103</div>
<div class="c dc" style="left:738px;top:804px;width:126px;height:20px;">HB29|ll10A0201</div>
<div class="c dc" style="left:865px;top:804px;width:131px;height:20px;">HB29|lll10A0102</div>
<div class="c dc" style="left:997px;top:804px;width:131px;height:20px;">HB29|lll10A0103</div>
<div class="c dc" style="left:1129px;top:804px;width:131px;height:20px;">HB29|lll10A0104</div>
<div class="c dc" style="left:1261px;top:804px;width:128px;height:20px;">HB29|ll10A0205</div>
<div class="c dc" style="left:1393px;top:804px;width:119px;height:20px;">HB29|lll10A0201</div>
<div class="c dc" style="left:1513px;top:804px;width:120px;height:20px;">HB29|lll10A0202</div>
<div class="c dc" style="left:1634px;top:804px;width:120px;height:20px;">HB29|lll10A0203</div>
<div class="c dc" style="left:1755px;top:804px;width:120px;height:20px;">HB29|lll10A0304</div>
<div class="c dc" style="left:1876px;top:804px;width:121px;height:20px;">HB29|lll10A0305</div>
<div class="c lc" style="left:5px;top:825px;width:292px;height:20px;">农业观光休闲旅游</div>
<div class="c dc" style="left:301px;top:825px;width:143px;height:20px;">HB30|ll10A0101</div>
<div class="c dc" style="left:445px;top:825px;width:144px;height:20px;">HB30|ll10A0102</div>
<div class="c dc" style="left:590px;top:825px;width:144px;height:20px;">HB30|ll10A0103</div>
<div class="c dc" style="left:738px;top:825px;width:126px;height:20px;">HB30|ll10A0201</div>
<div class="c dc" style="left:865px;top:825px;width:131px;height:20px;">HB30|lll10A0102</div>
<div class="c dc" style="left:997px;top:825px;width:131px;height:20px;">HB30|lll10A0103</div>
<div class="c dc" style="left:1129px;top:825px;width:131px;height:20px;">HB30|lll10A0104</div>
<div class="c dc" style="left:1261px;top:825px;width:128px;height:20px;">HB30|ll10A0205</div>
<div class="c dc" style="left:1393px;top:825px;width:119px;height:20px;">HB30|lll10A0201</div>
<div class="c dc" style="left:1513px;top:825px;width:120px;height:20px;">HB30|lll10A0202</div>
<div class="c dc" style="left:1634px;top:825px;width:120px;height:20px;">HB30|lll10A0203</div>
<div class="c dc" style="left:1755px;top:825px;width:120px;height:20px;">HB30|lll10A0304</div>
<div class="c dc" style="left:1876px;top:825px;width:121px;height:20px;">HB30|lll10A0305</div>
<div class="c lc hl" style="left:5px;top:846px;width:292px;height:20px;">7.旅游综合（旅行社）服务</div>
<div class="c dc b" style="left:301px;top:846px;width:143px;height:20px;">HB31|ll10A0101</div>
<div class="c dc b" style="left:445px;top:846px;width:144px;height:20px;">HB31|ll10A0102</div>
<div class="c dc b" style="left:590px;top:846px;width:144px;height:20px;">HB31|ll10A0103</div>
<div class="c dc b" style="left:738px;top:846px;width:126px;height:20px;">HB31|ll10A0201</div>
<div class="c dc b" style="left:865px;top:846px;width:131px;height:20px;">HB31|lll10A0102</div>
<div class="c dc b" style="left:997px;top:846px;width:131px;height:20px;">HB31|lll10A0103</div>
<div class="c dc b" style="left:1129px;top:846px;width:131px;height:20px;">HB31|lll10A0104</div>
<div class="c dc b" style="left:1261px;top:846px;width:128px;height:20px;">HB31|ll10A0205</div>
<div class="c dc b" style="left:1393px;top:846px;width:119px;height:20px;">HB31|lll10A0201</div>
<div class="c dc b" style="left:1513px;top:846px;width:120px;height:20px;">HB31|lll10A0202</div>
<div class="c dc b" style="left:1634px;top:846px;width:120px;height:20px;">HB31|lll10A0203</div>
<div class="c dc b" style="left:1755px;top:846px;width:120px;height:20px;">HB31|lll10A0304</div>
<div class="c dc b" style="left:1876px;top:846px;width:121px;height:20px;">HB31|lll10A0305</div>
<div class="c lc hl" style="left:5px;top:867px;width:292px;height:20px;">8.旅游娱乐服务</div>
<div class="c dc b" style="left:301px;top:867px;width:143px;height:20px;">HB32|ll10A0101</div>
<div class="c dc b" style="left:445px;top:867px;width:144px;height:20px;">HB32|ll10A0102</div>
<div class="c dc b" style="left:590px;top:867px;width:144px;height:20px;">HB32|ll10A0103</div>
<div class="c dc b" style="left:738px;top:867px;width:126px;height:20px;">HB32|ll10A0201</div>
<div class="c dc b" style="left:865px;top:867px;width:131px;height:20px;">HB32|lll10A0102</div>
<div class="c dc b" style="left:997px;top:867px;width:131px;height:20px;">HB32|lll10A0103</div>
<div class="c dc b" style="left:1129px;top:867px;width:131px;height:20px;">HB32|lll10A0104</div>
<div class="c dc b" style="left:1261px;top:867px;width:128px;height:20px;">HB32|ll10A0205</div>
<div class="c dc b" style="left:1393px;top:867px;width:119px;height:20px;">HB32|lll10A0201</div>
<div class="c dc b" style="left:1513px;top:867px;width:120px;height:20px;">HB32|lll10A0202</div>
<div class="c dc b" style="left:1634px;top:867px;width:120px;height:20px;">HB32|lll10A0203</div>
<div class="c dc b" style="left:1755px;top:867px;width:120px;height:20px;">HB32|lll10A0304</div>
<div class="c dc b" style="left:1876px;top:867px;width:121px;height:20px;">HB32|lll10A0305</div>
<div class="c lc" style="left:5px;top:888px;width:292px;height:20px;">其中：风情小镇娱乐服务</div>
<div class="c dc" style="left:301px;top:888px;width:143px;height:20px;">HB33|ll10A0101</div>
<div class="c dc" style="left:445px;top:888px;width:144px;height:20px;">HB33|ll10A0102</div>
<div class="c dc" style="left:590px;top:888px;width:144px;height:20px;">HB33|ll10A0103</div>
<div class="c dc" style="left:738px;top:888px;width:126px;height:20px;">HB33|ll10A0201</div>
<div class="c dc" style="left:865px;top:888px;width:131px;height:20px;">HB33|lll10A0102</div>
<div class="c dc" style="left:997px;top:888px;width:131px;height:20px;">HB33|lll10A0103</div>
<div class="c dc" style="left:1129px;top:888px;width:131px;height:20px;">HB33|lll10A0104</div>
<div class="c dc" style="left:1261px;top:888px;width:128px;height:20px;">HB33|ll10A0205</div>
<div class="c dc" style="left:1393px;top:888px;width:119px;height:20px;">HB33|lll10A0201</div>
<div class="c dc" style="left:1513px;top:888px;width:120px;height:20px;">HB33|lll10A0202</div>
<div class="c dc" style="left:1634px;top:888px;width:120px;height:20px;">HB33|lll10A0203</div>
<div class="c dc" style="left:1755px;top:888px;width:120px;height:20px;">HB33|lll10A0304</div>
<div class="c dc" style="left:1876px;top:888px;width:121px;height:20px;">HB33|lll10A0305</div>
<div class="c lc hl" style="left:5px;top:909px;width:292px;height:20px;">9.高尔夫球场服务</div>
<div class="c dc b" style="left:301px;top:909px;width:143px;height:20px;">HB34|ll10A0101</div>
<div class="c dc b" style="left:445px;top:909px;width:144px;height:20px;">HB34|ll10A0102</div>
<div class="c dc b" style="left:590px;top:909px;width:144px;height:20px;">HB34|ll10A0103</div>
<div class="c dc b" style="left:738px;top:909px;width:126px;height:20px;">HB34|ll10A0201</div>
<div class="c dc b" style="left:865px;top:909px;width:131px;height:20px;">HB34|lll10A0102</div>
<div class="c dc b" style="left:997px;top:909px;width:131px;height:20px;">HB34|lll10A0103</div>
<div class="c dc b" style="left:1129px;top:909px;width:131px;height:20px;">HB34|lll10A0104</div>
<div class="c dc b" style="left:1261px;top:909px;width:128px;height:20px;">HB34|ll10A0205</div>
<div class="c dc b" style="left:1393px;top:909px;width:119px;height:20px;">HB34|lll10A0201</div>
<div class="c dc b" style="left:1513px;top:909px;width:120px;height:20px;">HB34|lll10A0202</div>
<div class="c dc b" style="left:1634px;top:909px;width:120px;height:20px;">HB34|lll10A0203</div>
<div class="c dc b" style="left:1755px;top:909px;width:120px;height:20px;">HB34|lll10A0304</div>
<div class="c dc b" style="left:1876px;top:909px;width:121px;height:20px;">HB34|lll10A0305</div>
<div class="c lc hl" style="left:5px;top:930px;width:292px;height:20px;">10.婚庆服务</div>
<div class="c dc b" style="left:301px;top:930px;width:143px;height:20px;">HB35|ll10A0101</div>
<div class="c dc b" style="left:445px;top:930px;width:144px;height:20px;">HB35|ll10A0102</div>
<div class="c dc b" style="left:590px;top:930px;width:144px;height:20px;">HB35|ll10A0103</div>
<div class="c dc b" style="left:738px;top:930px;width:126px;height:20px;">HB35|ll10A0201</div>
<div class="c dc b" style="left:865px;top:930px;width:131px;height:20px;">HB35|lll10A0102</div>
<div class="c dc b" style="left:997px;top:930px;width:131px;height:20px;">HB35|lll10A0103</div>
<div class="c dc b" style="left:1129px;top:930px;width:131px;height:20px;">HB35|lll10A0104</div>
<div class="c dc b" style="left:1261px;top:930px;width:128px;height:20px;">HB35|ll10A0205</div>
<div class="c dc b" style="left:1393px;top:930px;width:119px;height:20px;">HB35|lll10A0201</div>
<div class="c dc b" style="left:1513px;top:930px;width:120px;height:20px;">HB35|lll10A0202</div>
<div class="c dc b" style="left:1634px;top:930px;width:120px;height:20px;">HB35|lll10A0203</div>
<div class="c dc b" style="left:1755px;top:930px;width:120px;height:20px;">HB35|lll10A0304</div>
<div class="c dc b" style="left:1876px;top:930px;width:121px;height:20px;">HB35|lll10A0305</div>
<div class="c lc hl" style="left:5px;top:951px;width:292px;height:20px;">11.会展服务</div>
<div class="c dc b" style="left:301px;top:951px;width:143px;height:20px;">HB36|ll10A0101</div>
<div class="c dc b" style="left:445px;top:951px;width:144px;height:20px;">HB36|ll10A0102</div>
<div class="c dc b" style="left:590px;top:951px;width:144px;height:20px;">HB36|ll10A0103</div>
<div class="c dc b" style="left:738px;top:951px;width:126px;height:20px;">HB36|ll10A0201</div>
<div class="c dc b" style="left:865px;top:951px;width:131px;height:20px;">HB36|lll10A0102</div>
<div class="c dc b" style="left:997px;top:951px;width:131px;height:20px;">HB36|lll10A0103</div>
<div class="c dc b" style="left:1129px;top:951px;width:131px;height:20px;">HB36|lll10A0104</div>
<div class="c dc b" style="left:1261px;top:951px;width:128px;height:20px;">HB36|ll10A0205</div>
<div class="c dc b" style="left:1393px;top:951px;width:119px;height:20px;">HB36|lll10A0201</div>
<div class="c dc b" style="left:1513px;top:951px;width:120px;height:20px;">HB36|lll10A0202</div>
<div class="c dc b" style="left:1634px;top:951px;width:120px;height:20px;">HB36|lll10A0203</div>
<div class="c dc b" style="left:1755px;top:951px;width:120px;height:20px;">HB36|lll10A0304</div>
<div class="c dc b" style="left:1876px;top:951px;width:121px;height:20px;">HB36|lll10A0305</div>
<div class="c lc hl" style="left:5px;top:972px;width:292px;height:20px;">12.康疗服务</div>
<div class="c dc b" style="left:301px;top:972px;width:143px;height:20px;">HB37|ll10A0101</div>
<div class="c dc b" style="left:445px;top:972px;width:144px;height:20px;">HB37|ll10A0102</div>
<div class="c dc b" style="left:590px;top:972px;width:144px;height:20px;">HB37|ll10A0103</div>
<div class="c dc b" style="left:738px;top:972px;width:126px;height:20px;">HB37|ll10A0201</div>
<div class="c dc b" style="left:865px;top:972px;width:131px;height:20px;">HB37|lll10A0102</div>
<div class="c dc b" style="left:997px;top:972px;width:131px;height:20px;">HB37|lll10A0103</div>
<div class="c dc b" style="left:1129px;top:972px;width:131px;height:20px;">HB37|lll10A0104</div>
<div class="c dc b" style="left:1261px;top:972px;width:128px;height:20px;">HB37|ll10A0205</div>
<div class="c dc b" style="left:1393px;top:972px;width:119px;height:20px;">HB37|lll10A0201</div>
<div class="c dc b" style="left:1513px;top:972px;width:120px;height:20px;">HB37|lll10A0202</div>
<div class="c dc b" style="left:1634px;top:972px;width:120px;height:20px;">HB37|lll10A0203</div>
<div class="c dc b" style="left:1755px;top:972px;width:120px;height:20px;">HB37|lll10A0304</div>
<div class="c dc b" style="left:1876px;top:972px;width:121px;height:20px;">HB37|lll10A0305</div>
<div class="c lh" style="left:5px;top:153px;width:292px;height:20px;border-top-color:#fff;border-left-color:#b0e8fb">项目名称</div>
<div class="c lh" style="left:5px;top:174px;width:292px;height:20px;line-height:18px">单位：万元</div>
<div class="c lh" style="left:5px;top:195px;width:292px;height:20px;"></div>
<div class="c h1" style="left:301px;top:153px;width:433px;height:20px;">境外游客</div>
<div class="c h2 tall" style="left:301px;top:174px;width:143px;height:41px;">一日游</div>
<div class="c h2 tall" style="left:445px;top:174px;width:144px;height:41px;">过夜游</div>
<div class="c h2 tall" style="left:590px;top:174px;width:144px;height:41px;">总计</div>
<div class="c h1" style="left:738px;top:153px;width:651px;height:20px;">省外国内游客</div>
<div class="c h2 tall" style="left:738px;top:174px;width:126px;height:41px;">一日游</div>
<div class="c h2" style="left:865px;top:174px;width:395px;height:20px;">过夜游</div>
<div class="c h2" style="left:865px;top:195px;width:131px;height:20px;">旅居旅游者</div>
<div class="c h2" style="left:997px;top:195px;width:131px;height:20px;">常规旅游者</div>
<div class="c h2" style="left:1129px;top:195px;width:131px;height:20px;">日短租游客</div>
<div class="c h2 tall" style="left:1261px;top:174px;width:128px;height:41px;">总计</div>
<div class="c h1" style="left:1393px;top:153px;width:604px;height:20px;"></div>
<div class="c h2" style="left:1393px;top:174px;width:361px;height:20px;">境外游</div>
<div class="c h2" style="left:1755px;top:174px;width:242px;height:20px;"></div>
<div class="c h2" style="left:1393px;top:195px;width:119px;height:20px;">一日游</div>
<div class="c h2" style="left:1513px;top:195px;width:120px;height:20px;">过夜游</div>
<div class="c h2" style="left:1634px;top:195px;width:120px;height:20px;">总计</div>
<div class="c h2" style="left:1755px;top:195px;width:120px;height:20px;">一日游</div>
<div class="c h2" style="left:1876px;top:195px;width:121px;height:20px;">过夜游</div>
 <div class="a" style="left:298px;top:151px;width:2px;height:840px;background:#d8d8d8"></div>
 <div class="a" style="left:735px;top:151px;width:2px;height:840px;background:#d8d8d8"></div>
 <div class="a" style="left:1390px;top:151px;width:2px;height:840px;background:#d8d8d8"></div>
</div>
<!-- inner scrollbar -->
<div class="a" style="left:1882px;top:90px;width:17px;height:898px;background:#f1f1f1"></div>
<div class="a" style="left:1886px;top:96px;width:0;height:0;border-left:4.5px solid transparent;border-right:4.5px solid transparent;border-bottom:4.5px solid #505050"></div>
<div class="a" style="left:1884px;top:139px;width:13px;height:642px;background:#c1c1c1"></div>
<!-- dropdown -->
<div id="dd"><div class="ddi"></div><div class="ddi">核算系统报表格式表一行测试</div><div class="ddi">2019核算系统报表格式表*****二成果行模板</div><div class="ddi sel">2019核算系统报表格式表*****三成果行模板</div><div class="ddi">2019核算系统报表格式表*****四成果行模板</div><div class="ddi">2019核算系统报表格式表*****五成果行模板</div><div class="ddi">2019核算系统报表格式表*****六成果行模板</div><div class="ddi">2019核算系统报表格式表*****七成果行模板</div><div class="ddi">2019核算系统报表格式表*****八成果行模板</div><div class="ddi">2019核算系统报表格式表*****九行模板</div><div class="ddi">2019核算系统报表格式表*****10B行模版</div><div class="ddi">2019核算系统报表格式表*****一成果行模板</div></div>
<div class="a" style="left:1883px;top:35px"><svg width="38" height="38" viewBox="0 0 38 38"><g opacity="0.33"><path d="M18.5 7.5 L30 30 L7 30 Z" fill="#8fcf8f" stroke="#8fcf8f" stroke-width="10" stroke-linejoin="round"/></g><path d="M15.5 13.5 Q19.5 9.8 25 13.5" fill="none" stroke="rgba(255,255,255,0.75)" stroke-width="1.3"/></svg></div>
<!-- window frame -->
<div class="a" style="left:0;top:0;width:1924px;height:2px;background:#00aeef"></div>
<div class="a" style="left:0;top:988px;width:1924px;height:2px;background:#00aeef"></div>
<div class="a" style="left:0;top:0;width:2px;height:990px;background:#00aeef"></div>
<div class="a" style="left:1922px;top:0;width:2px;height:990px;background:#00aeef"></div>
<script>
(function(){
 try{
  var t=document.createElement('span');
  t.style.cssText='position:absolute;left:0;top:0;visibility:hidden;font-size:100px;font-family:"Liberation Sans",sans-serif;white-space:nowrap';
  t.textContent='\u6838\u7b97\u7cfb\u7edf';
  document.body.appendChild(t);
  var w=t.getBoundingClientRect().width;
  document.body.removeChild(t);
  if(!(w>0) || w>370) return;
  var walker=document.createTreeWalker(document.body,NodeFilter.SHOW_TEXT,null,false);
  var nodes=[];while(walker.nextNode())nodes.push(walker.currentNode);
  var re=/[\u2e80-\u9fff\uff00-\uffef]+/g;
  var spans=[];
  for(var i=0;i<nodes.length;i++){
   var n=nodes[i],s=n.nodeValue;
   if(!n.parentNode||n.parentNode.nodeName==='SCRIPT'||n.parentNode.nodeName==='STYLE')continue;
   re.lastIndex=0; if(!re.test(s))continue; re.lastIndex=0;
   var frag=document.createDocumentFragment(),last=0,m;
   while((m=re.exec(s))){
    if(m.index>last)frag.appendChild(document.createTextNode(s.slice(last,m.index)));
    var sp=document.createElement('span');sp.className='cjk';sp.textContent=m[0];frag.appendChild(sp);spans.push(sp);
    last=m.index+m[0].length;
   }
   if(last<s.length)frag.appendChild(document.createTextNode(s.slice(last)));
   n.parentNode.replaceChild(frag,n);
  }
  var prepared=[];
  for(var k=0;k<spans.length;k++){
   var sp=spans[k],cs=getComputedStyle(sp);
   var col=cs.color.match(/[\d.]+/g)||[0,0,0];
   var fs=parseFloat(cs.fontSize)||12;
   var bold=parseInt(cs.fontWeight,10)>=600;
   prepared.push([sp,col,fs,bold,sp.textContent.length]);
  }
  for(var k=0;k<prepared.length;k++){
   var p=prepared[k],sp=p[0],col=p[1],fs=p[2],bold=p[3],len=p[4];
   var tw=sp.getBoundingClientRect().width;
   var adv=len>0?tw/len:fs*0.75;
   var ls=Math.max(0,fs-adv);
   var lum=0.299*col[0]+0.587*col[1]+0.114*col[2]; var a=bold?0.52:(lum>128?0.38:0.32);
   var c='rgba('+col[0]+','+col[1]+','+col[2]+','+a+')';
   sp.style.letterSpacing=ls+'px';
   sp.style.color='transparent';
   sp.style.backgroundImage='linear-gradient(90deg,'+c+' 0,'+c+' '+(fs*0.9)+'px,transparent '+(fs*0.9)+'px)';
   sp.style.backgroundSize=fs+'px '+(fs*0.92)+'px';
   sp.style.backgroundPosition=(fs*0.05)+'px '+(fs*0.06)+'px';
   sp.style.backgroundRepeat='repeat-x';
  }
 }catch(e){}
})();
</script>
</body></html>
